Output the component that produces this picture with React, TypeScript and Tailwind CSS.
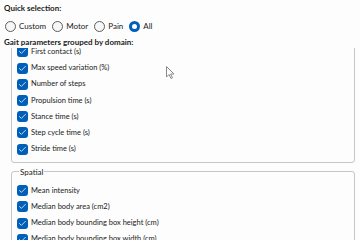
import { Check } from "lucide-react";

const timing = [
  "First contact (s)",
  "Max speed variation (%)",
  "Number of steps",
  "Propulsion time (s)",
  "Stance time (s)",
  "Step cycle time (s)",
  "Stride time (s)",
];

const spatial = [
  "Mean intensity",
  "Median body area (cm2)",
  "Median body bounding box height (cm)",
  "Median body bounding box width (cm)",
];

const modes = ["Custom", "Motor", "Pain", "All"];

function Radio({ label, checked }: { label: string; checked?: boolean }) {
  return (
    <label className="flex items-center gap-[3px] mr-[6px]">
      {checked ? (
        <span className="w-[11px] h-[11px] rounded-full bg-[#005fb8] flex items-center justify-center">
          <span className="w-[5px] h-[5px] rounded-full bg-white" />
        </span>
      ) : (
        <span className="w-[11px] h-[11px] rounded-full border border-[#5c5c5c] bg-[#f7f7f7]" />
      )}
      <span>{label}</span>
    </label>
  );
}

function CheckRow({ label }: { label: string }) {
  return (
    <div className="h-[16.2px] flex items-center gap-[3px] text-[7.5px]">
      <span className="w-[11px] h-[11px] rounded-[3px] bg-[#005fb8] flex items-center justify-center">
        <Check className="w-[9px] h-[9px] text-white" strokeWidth={2} />
      </span>
      <span>{label}</span>
    </div>
  );
}

export default function App() {
  return (
    <div className="relative w-[360px] h-[240px] overflow-hidden bg-[#fcfdfc] text-[8px] leading-[12px] text-[#1b1b1b] font-['Lato',sans-serif]">
      <div className="pl-[4px] pt-[2px] font-bold">Quick selection:</div>
      <div className="flex items-center pl-[5px] mt-[6px] h-[12px]">
        {modes.map((m) => (
          <Radio key={m} label={m} checked={m === "All"} />
        ))}
      </div>
      <div className="pl-[4px] mt-[4px] font-bold">Gait parameters grouped by domain:</div>

      {/* scrolled list */}
      <div className="h-[192px] overflow-hidden">
        <div className="-mt-[21px]">
          <div className="ml-[11px] w-[344px] border border-[#c6c6c6] rounded-[3px] pl-[5px] pt-[15.9px] pb-[5px]">
            {timing.map((t) => (
              <CheckRow key={t} label={t} />
            ))}
          </div>
          <fieldset className="mt-[2.5px] ml-[11px] w-[344px] border border-[#c6c6c6] rounded-[3px] pl-[5px] pt-[5px] pb-[3px]">
            <legend className="ml-[2px] px-[1px]">Spatial</legend>
            {spatial.map((t) => (
              <CheckRow key={t} label={t} />
            ))}
          </fieldset>
        </div>
      </div>

      {/* mouse pointer */}
      <svg className="absolute left-[166px] top-[66px]" width="10" height="14" viewBox="0 0 10 14">
        <path d="M0.5 0.5 L0.5 11 L3 8.5 L5 12.5 L6.5 11.8 L4.6 8 L8 8 Z" fill="#ffffff" stroke="#8a8a8a" strokeWidth="1" />
      </svg>
    </div>
  );
}
